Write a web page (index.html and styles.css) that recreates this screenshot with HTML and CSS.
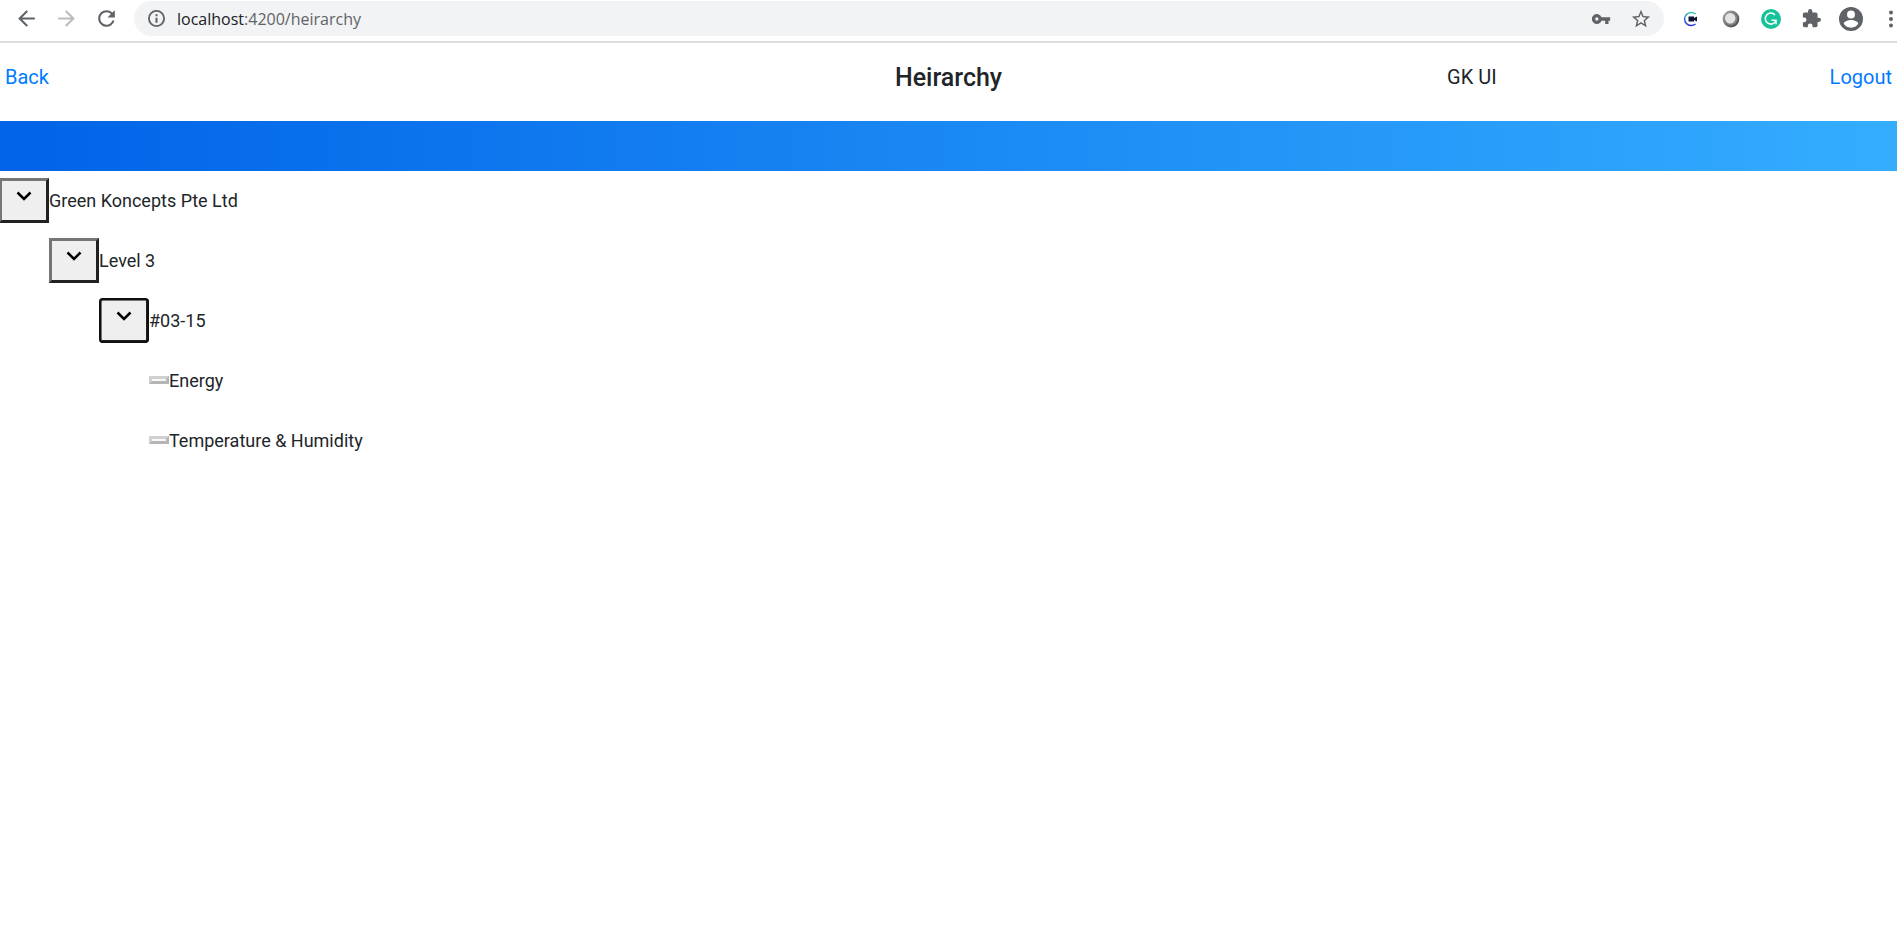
FILE: index.html
```html
<!DOCTYPE html>
<html lang="en">
<head>
<meta charset="utf-8">
<title>Heirarchy</title>
<link rel="stylesheet" href="styles.css">
</head>
<body>
<div class="toolbar">
  <div class="nav">
    <button class="tool" aria-label="Go back"><svg width="25" height="25" viewBox="0 0 24 24"><path d="M20 11H7.830l5.590-5.590L12 4l-8 8 8 8 1.410-1.410L7.830 13H20z"/></svg></button>
    <button class="tool disabled" aria-label="Go forward" disabled><svg width="25" height="25" viewBox="0 0 24 24"><path d="M12 4l-1.410 1.410L16.170 11H4v2h12.170l-5.580 5.590L12 20l8-8z"/></svg></button>
    <button class="tool" aria-label="Reload"><svg width="25" height="25" viewBox="0 0 24 24"><path d="M17.650 6.350A7.960 7.960 0 0 0 12 4a8 8 0 1 0 7.730 10h-2.080A6 6 0 1 1 12 6c1.660 0 3.140.69 4.220 1.780L13 11h7V4z"/></svg></button>
  </div>
  <div class="address">
    <svg class="info" width="17" height="17" viewBox="2 2 20 20"><path d="M10.800 17h2.400v-6h-2.400zM12 2a10 10 0 1 0 0 20 10 10 0 0 0 0-20zm0 17.800a7.800 7.800 0 1 1 0-15.600 7.800 7.800 0 0 1 0 15.600zM10.800 9.400h2.400V7h-2.400z"/></svg>
    <div class="url"><span class="host">localhost</span>:4200/heirarchy</div>
    <button class="tool" aria-label="Passwords"><svg width="20" height="20" viewBox="0 0 24 24"><path d="M12.650 10A6 6 0 1 0 12.650 14H17v4h4v-4h2v-4zM7 14a2 2 0 1 1 0-4 2 2 0 0 1 0 4z"/></svg></button>
    <button class="tool" aria-label="Bookmark"><svg width="22" height="22" viewBox="0 0 24 24"><path d="M22 9.240l-7.190-.62L12 2 9.190 8.630 2 9.240l5.460 4.730L5.820 21 12 17.270 18.180 21l-1.630-7.030zM12 15.400l-3.760 2.270 1-4.280-3.320-2.880 4.380-.38L12 6.100l1.710 4.040 4.380.38-3.320 2.880 1 4.280z"/></svg></button>
  </div>
  <div class="extensions">
    <button class="tool" aria-label="Screen recorder"><svg width="20" height="20" viewBox="0 0 20 20"><defs><linearGradient id="ring" x1="0" y1="0" x2="0" y2="1"><stop offset="0" stop-color="#35c3b5"/><stop offset=".45" stop-color="#2a78c8"/><stop offset="1" stop-color="#2c2fe0"/></linearGradient></defs><path d="M14.500 5A6.600 6.600 0 1 0 14.500 15" fill="none" stroke="url(#ring)" stroke-width="1.500"/><path d="M7.500 7.500H13v1.500l3-1.500v5L13 11v1.500H7.500z" fill="#101335"/></svg></button>
    <button class="tool" aria-label="Sphere"><svg width="20" height="20" viewBox="0 0 20 20"><defs><linearGradient id="ball" x1="0" y1="0" x2="1" y2="1"><stop offset=".2" stop-color="#999"/><stop offset=".8" stop-color="#555"/></linearGradient></defs><circle cx="10" cy="10" r="8.400" fill="url(#ball)"/><circle cx="10" cy="10" r="6.200" fill="#888"/><circle cx="9.200" cy="9.200" r="5.200" fill="#e4e4e4"/></svg></button>
    <button class="tool" aria-label="Grammar check"><svg width="20" height="20" viewBox="0 0 20 20"><circle cx="10" cy="10" r="10" fill="#15c39a"/><path d="M14 6A5.500 5.500 0 1 0 14.800 12M10.500 11.200H15v4" fill="none" stroke="#fff" stroke-width="1.500"/></svg></button>
    <button class="tool" aria-label="Extensions"><svg width="19" height="19" viewBox="1 1 22 22"><path d="M20.500 11H19V7a2 2 0 0 0-2-2h-4V3.500a2.500 2.500 0 0 0-5 0V5H4a2 2 0 0 0-2 2v3.800h1.500a2.700 2.700 0 0 1 0 5.400H2V20a2 2 0 0 0 2 2h3.800v-1.500a2.700 2.700 0 0 1 5.400 0V22H17a2 2 0 0 0 2-2v-4h1.500a2.500 2.500 0 0 0 0-5z"/></svg></button>
    <button class="tool" aria-label="Profile"><svg width="24" height="24" viewBox="2 2 20 20"><path d="M12 2a10 10 0 1 0 0 20 10 10 0 0 0 0-20zm0 3a3.300 3.300 0 1 1 0 6.600A3.300 3.300 0 0 1 12 5zm0 14.200a7.200 7.200 0 0 1-6-3.220c.03-1.990 4-3.080 6-3.080s5.970 1.090 6 3.080a7.200 7.200 0 0 1-6 3.220z"/></svg></button>
    <button class="tool" aria-label="Menu"><svg width="24" height="24" viewBox="0 0 24 24"><circle cx="12" cy="5.500" r="2"/><circle cx="12" cy="12" r="2"/><circle cx="12" cy="18.500" r="2"/></svg></button>
  </div>
</div>
<header class="header">
  <a class="link" href="#back">Back</a>
  <h1 class="title">Heirarchy</h1>
  <div class="account"><span>GK UI</span><a class="link" href="#logout">Logout</a></div>
</header>
<div class="band"></div>
<main>
  <ul class="tree">
    <li>
      <div class="node"><button class="toggle" aria-label="Toggle Green Koncepts Pte Ltd"><svg class="chevron" width="16" height="10" viewBox="0 0 16 10"><path d="M1.500 1.500L8 8l6.500-6.500"/></svg></button><span>Green Koncepts Pte Ltd</span></div>
      <ul>
        <li>
          <div class="node"><button class="toggle" aria-label="Toggle Level 3"><svg class="chevron" width="16" height="10" viewBox="0 0 16 10"><path d="M1.500 1.500L8 8l6.500-6.500"/></svg></button><span>Level 3</span></div>
          <ul>
            <li>
              <div class="node"><button class="toggle focused" aria-label="Toggle #03-15"><svg class="chevron" width="16" height="10" viewBox="0 0 16 10"><path d="M1.500 1.500L8 8l6.500-6.500"/></svg></button><span>#03-15</span></div>
              <ul>
                <li class="node"><button class="leaf" aria-label="Energy" disabled></button><span>Energy</span></li>
                <li class="node"><button class="leaf" aria-label="Temperature &amp; Humidity" disabled></button><span>Temperature &amp; Humidity</span></li>
              </ul>
            </li>
          </ul>
        </li>
      </ul>
    </li>
  </ul>
</main>
</body>
</html>
```
FILE: styles.css
```css
* { box-sizing: border-box; }
body {
  margin: 0;
  background: #fff;
  color: #212529;
  font-family: Roboto, sans-serif;
  overflow-x: hidden;
}
button { font: inherit; }
.toolbar {
  display: flex;
  align-items: center;
  height: 43px;
  padding: 0 0 4px 6px;
  border-bottom: 2px solid #dadce0;
}
.nav, .extensions { display: flex; }
.tool {
  display: flex;
  flex: none;
  align-items: center;
  justify-content: center;
  width: 40px;
  height: 32px;
  padding: 0;
  border: 0;
  background: none;
}
.tool svg, .info { display: block; fill: #5f6368; }
.disabled svg { fill: #babcbe; }
.address {
  display: flex;
  flex: 1;
  align-items: center;
  height: 35px;
  margin-left: 8px;
  padding: 0 3px 0 14px;
  border-radius: 18px;
  background: #f1f3f4;
}
.url {
  flex: 1;
  margin-left: 12px;
  color: #5f6368;
  font: 16px/24px "Open Sans", sans-serif;
}
.host { color: #202124; }
.extensions { margin: 0 -14px 0 7px; }
.header {
  display: grid;
  grid-template-columns: 1fr auto 1fr;
  align-items: center;
  height: 78px;
  padding: 0 5px 10px;
  font-size: 20px;
  line-height: 30px;
}
.link { color: #007bff; text-decoration: none; }
.title {
  margin: 0;
  padding-top: 2px;
  font-size: 25px;
  font-weight: 500;
  line-height: 30px;
}
.account {
  display: flex;
  justify-content: space-between;
  padding-left: 50%;
}
.band {
  height: 50px;
  background: linear-gradient(to right, #0063e8, #34adff);
}
.tree { margin: -1px 0 0 -1px; font-size: 18px; }
.tree, .tree ul { padding: 0; list-style: none; }
.tree ul { margin: 0 0 0 50px; }
.node { display: flex; align-items: center; height: 60px; }
.toggle {
  display: flex;
  justify-content: center;
  width: 50px;
  height: 45px;
  padding: 0 0 8px;
  border: 3px solid;
  border-color: #767676 #212121 #212121 #767676;
  background: #efefef;
}
.focused {
  border-radius: 4px;
  outline: 2px solid #101010;
  outline-offset: -2px;
}
.chevron { align-self: center; fill: none; stroke: #000; stroke-width: 2.500; }
.leaf {
  width: 20px;
  height: 8px;
  padding: 0;
  border: 3px solid;
  border-color: #d0d0d0 #b5b5b5 #b5b5b5 #d0d0d0;
  background: #f8f8f8;
}
```
